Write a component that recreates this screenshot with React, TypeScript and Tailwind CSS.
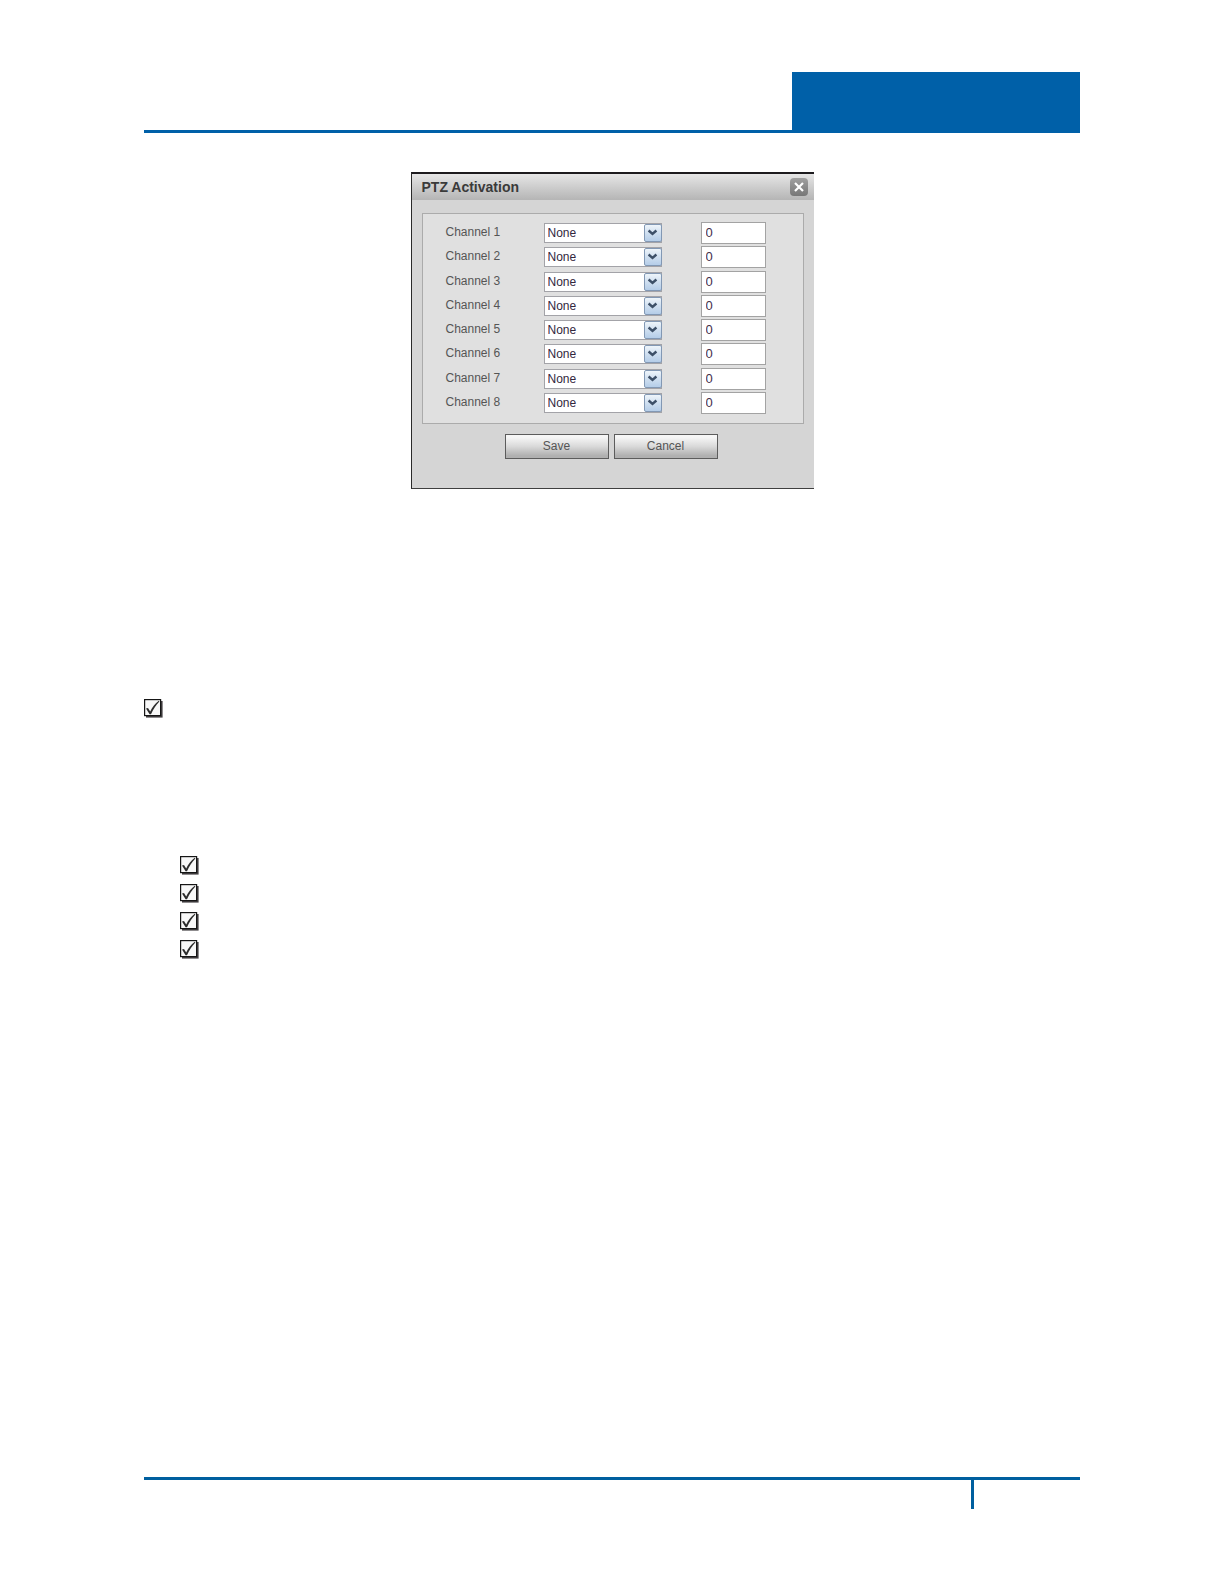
import React from "react";

const channels = [1, 2, 3, 4, 5, 6, 7, 8];
const options = ["Protocol A", "Protocol B"];

const ChannelRow: React.FC<{ channel: number }> = ({ channel }) => {
  const id = `channel-${channel}`;
  return (
    <div className="flex items-center">
      <label htmlFor={id} className="w-[98px] shrink-0 pb-[2px] leading-4 text-[#555555]">
        Channel {channel}
      </label>
      <div className="relative h-5 w-[118px] shrink-0">
        <select
          id={id}
          defaultValue="None"
          className="block h-5 w-full appearance-none border border-[#a3a3a8] bg-white pl-[3px] text-[#33273d] outline-none"
        >
          <option>None</option>
          {options.map((option) => (
            <option key={option}>{option}</option>
          ))}
        </select>
        <svg
          viewBox="0 0 18 18"
          className="pointer-events-none absolute top-px right-0 size-[18px]"
          aria-hidden="true"
        >
          <defs>
            <linearGradient id={`${id}-arrow`} x1="0" y1="0" x2="0" y2="1">
              <stop offset="0" stopColor="#f0f6fb" />
              <stop offset="0.5" stopColor="#cfdff0" />
              <stop offset="1" stopColor="#b3cce8" />
            </linearGradient>
          </defs>
          <rect
            x="0.5"
            y="0.5"
            width="17"
            height="17"
            rx="1.5"
            fill={`url(#${id}-arrow)`}
            stroke="#8298b4"
          />
          <path d="M4.6 6.5 L8.5 10 L12.4 6.5" fill="none" stroke="#3d5068" strokeWidth="2.4" />
        </svg>
      </div>
      <input
        type="text"
        defaultValue="0"
        aria-label={`Channel ${channel} address`}
        className="ml-[39px] h-[22px] w-[65px] shrink-0 border border-[#a3a3a3] bg-white px-1 pb-px text-[13px] text-[#44304c] outline-none"
      />
    </div>
  );
};

const DialogButton: React.FC<{ children: React.ReactNode }> = ({ children }) => (
  <button
    type="button"
    className="h-[25px] w-[104px] border border-[#5c5c5c] bg-linear-to-b from-[#f6f6f6] from-10% via-[#d9d9d9] via-50% to-[#b0b0b0] to-90% pb-[2px] text-[#555555]"
  >
    {children}
  </button>
);

const PtzDialog: React.FC = () => (
  <section
    role="dialog"
    aria-labelledby="ptz-title"
    className="mx-auto h-[317px] w-[403px] border-t-2 border-b border-l border-t-[#1d1b1e] border-b-[#3f3f3f] border-l-[#2b2b2b] bg-[#d5d5d5] text-xs"
  >
    <header className="flex h-[26px] items-center justify-between bg-linear-to-b from-[#e6e6e6] to-[#b5b5b5] pr-[6px] pl-[10px]">
      <h1 id="ptz-title" className="text-sm font-bold text-[#3a3a3a]">
        PTZ Activation
      </h1>
      <button
        type="button"
        aria-label="Close"
        className="flex size-[18px] items-center justify-center rounded-sm bg-linear-to-b from-[#a0a0a0] to-[#777777]"
      >
        <svg viewBox="0 0 10 10" className="size-[10px]" aria-hidden="true">
          <path d="M1 1 L9 9 M9 1 L1 9" stroke="#ffffff" strokeWidth="2.2" />
        </svg>
      </button>
    </header>
    <div className="mx-[10px] mt-[13px] border border-[#ababab] bg-[#e0e0e0] pt-2 pb-[9px] pl-[23px]">
      <div className="flex h-48 flex-col justify-between">
        {channels.map((channel) => (
          <ChannelRow key={channel} channel={channel} />
        ))}
      </div>
    </div>
    <div className="mt-[10px] flex gap-[5px] pl-[93px]">
      <DialogButton>Save</DialogButton>
      <DialogButton>Cancel</DialogButton>
    </div>
  </section>
);

const CheckMark: React.FC<{ label: string }> = ({ label }) => (
  <span className="relative block size-[19px]">
    <input
      type="checkbox"
      defaultChecked
      aria-label={label}
      className="peer absolute inset-0 size-full appearance-none"
    />
    <svg
      viewBox="0 0 19 19"
      className="pointer-events-none relative block size-[19px] [&>path]:invisible peer-checked:[&>path]:visible"
      aria-hidden="true"
    >
      <rect x="2" y="2" width="16.6" height="16.6" fill="#454244" />
      <rect x="0.6" y="0.6" width="16" height="16" fill="#f8f8f8" stroke="#151515" strokeWidth="1.2" />
      <path
        d="M2 9.4 L4 9 L6.2 12.4 C8.4 8.2 11 4.8 14.8 1.8 L15.4 2.6 C12 6.2 9.4 10.4 7 15.2 L5.6 15.2 Z"
        fill="#2c2c2c"
      />
    </svg>
  </span>
);

export default function App() {
  return (
    <div className="flex min-h-screen flex-col bg-white px-36 pt-[72px] pb-[75px] font-['Liberation_Sans',Arial,sans-serif]">
      <div className="flex justify-end border-b-3 border-[#0060a8]">
        <div className="h-[58px] w-72 bg-[#0060a8]" />
      </div>
      <main className="pt-[39px]">
        <PtzDialog />
        <div className="mt-[210px]">
          <CheckMark label="Item" />
        </div>
        <ul className="mt-[138px] flex flex-col gap-[9px] pl-9">
          {[1, 2, 3, 4].map((item) => (
            <li key={item}>
              <CheckMark label={`Item ${item}`} />
            </li>
          ))}
        </ul>
      </main>
      <footer className="mt-auto flex justify-end border-t-3 border-[#005f9f]">
        <div className="h-[29px] w-[109px] border-l-3 border-[#005f9f]" />
      </footer>
    </div>
  );
}
